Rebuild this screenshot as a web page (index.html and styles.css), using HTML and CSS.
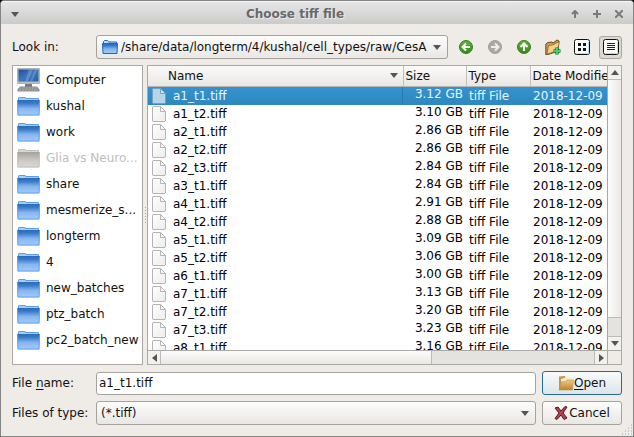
FILE: index.html
```html
<!DOCTYPE html>
<html lang="en">
<head>
<meta charset="utf-8">
<title>Choose tiff file</title>
<link rel="stylesheet" href="styles.css">
</head>
<body>
<svg class="defs" aria-hidden="true">
  <defs>
    <linearGradient id="blue" x1="0" y1="0" x2="0" y2="1">
      <stop offset="0" stop-color="#2a6cb9"/><stop offset=".2" stop-color="#3778c4"/><stop offset=".55" stop-color="#86b6ee"/><stop offset="1" stop-color="#a2ccff"/>
    </linearGradient>
    <linearGradient id="grey" x1="0" y1="0" x2="0" y2="1">
      <stop offset="0" stop-color="#a5a19c"/><stop offset=".6" stop-color="#cfccc8"/><stop offset="1" stop-color="#dad7d4"/>
    </linearGradient>
    <linearGradient id="paper" x1="0" y1="0" x2="1" y2="1">
      <stop offset="0" stop-color="#ffffff"/><stop offset="1" stop-color="#ececec"/>
    </linearGradient>
    <linearGradient id="green" x1="0" y1="0" x2="0" y2="1">
      <stop offset="0" stop-color="#63b53c"/><stop offset="1" stop-color="#2f8a18"/>
    </linearGradient>
    <linearGradient id="gold" x1="0" y1="0" x2="0" y2="1">
      <stop offset="0" stop-color="#f0c886"/><stop offset="1" stop-color="#bd8228"/>
    </linearGradient>
    <linearGradient id="screen" x1="0" y1="0" x2="1" y2="1">
      <stop offset="0" stop-color="#1d4f9c"/><stop offset=".5" stop-color="#3f77bd"/><stop offset="1" stop-color="#2a60a8"/>
    </linearGradient>
    <symbol id="folder" viewBox="0 0 23 20">
      <path d="M1 3h21v3H1z" fill="#a9cdf7"/>
      <path d="M1.500 4V2q0-.5.500-.5h6q.5 0 .5.500v.5h13V4" fill="#a9cdf7" stroke="#5b9eec"/>
      <path d="M0 4h23l-.5 15.500H.500z" fill="url(#blue)"/>
      <path d="M.5 4.500l.5 14.500h21l.5-14.500" fill="none" stroke="#5fa3f5"/>
    </symbol>
    <symbol id="folder-off" viewBox="0 0 23 20">
      <path d="M1 3h21v3H1z" fill="#dad7d4"/>
      <path d="M1.500 4V2q0-.5.500-.5h6q.5 0 .5.500v.5h13V4" fill="#dad7d4" stroke="#c3bfbb"/>
      <path d="M0 4h23l-.5 15.500H.500z" fill="url(#grey)"/>
      <path d="M.5 4.500l.5 14.500h21l.5-14.500" fill="none" stroke="#c3bfbb"/>
    </symbol>
    <symbol id="computer" viewBox="0 0 23 24">
      <path d="M.5.5h22v15H.500z" fill="#b9bdc2" stroke="#b0b4b8"/>
      <path d="M1.500 1.500h20v12h-20z" fill="url(#screen)"/>
      <path d="M12 1.500h4l-5 12H8zM18 1.500h2l-5 12h-2z" fill="#7da7d8" opacity=".5"/>
      <path d="M8 16h7v3H8z" fill="#777b7c"/>
      <path d="M3 18.500h17l2.500 3v2H.5v-2z" fill="#8b8d8c"/>
      <path d="M3 20h17M2 22h19" stroke="#b0b2b0" stroke-dasharray="2 1"/>
    </symbol>
    <symbol id="file" viewBox="0 0 14 16">
      <path d="M1 .5h7.500l5 5v9.500l-.5.5H1L.5 15V1z" fill="url(#paper)" stroke="#b4b4b4"/>
      <path d="M8.500.5v5h5z" fill="#f8f8f8" stroke="#b4b4b4"/>
    </symbol>
    <symbol id="file-on" viewBox="0 0 14 16">
      <path d="M1 .5h7.500l5 5v9.500l-.5.5H1L.5 15V1z" fill="#b7d5e8" stroke="#6fa3c4"/>
      <path d="M8.500.5v5h5z" fill="#cbe2f0" stroke="#6fa3c4"/>
    </symbol>
    <symbol id="down" viewBox="0 0 8 5"><path d="M0 0h8L4 5z" fill="#555"/></symbol>
    <symbol id="up" viewBox="0 0 8 5"><path d="M0 5h8L4 0z" fill="#555"/></symbol>
    <symbol id="left" viewBox="0 0 5 8"><path d="M5 0v8L0 4z" fill="#555"/></symbol>
    <symbol id="right" viewBox="0 0 5 8"><path d="M0 0v8l5-4z" fill="#555"/></symbol>
  </defs>
</svg>
<main class="window">
  <header class="titlebar">
    <button class="wm" aria-label="Window menu"><svg width="8" height="5"><use href="#down"/></svg></button>
    <h1>Choose tiff file</h1>
    <div class="wm-group">
      <button class="wm" aria-label="Shade"><svg width="8" height="8" viewBox="0 0 8 8"><path d="M4 8V1M1 4l3-3 3 3" fill="none" stroke="#7a7a7a" stroke-width="2"/></svg></button>
      <button class="wm" aria-label="Maximize"><svg width="8" height="8" viewBox="0 0 8 8"><path d="M4 0v8M0 4h8" stroke="#7a7a7a" stroke-width="2"/></svg></button>
      <button class="wm" aria-label="Close"><svg width="8" height="8" viewBox="0 0 8 8"><path d="M0 0l8 8M8 0L0 8" stroke="#7a7a7a" stroke-width="2"/></svg></button>
    </div>
  </header>
  <form class="content">
    <div class="lookin">
      <label class="caption" for="path">Look in:</label>
      <div class="combo with-icon">
        <svg class="combo-icon" width="16" height="14" viewBox="0 0 16 14"><path d="M1.500 3V1.500l1-1h3l1 1V2h8v2h-13z" fill="#bcd7f5" stroke="#1467cc"/><path d="M.5 3.500h15l-.5 10H1z" fill="url(#blue)" stroke="#1467cc"/></svg>
        <select id="path"><option>/share/data/longterm/4/kushal/cell_types/raw/CesA</option></select>
        <svg class="combo-arrow" width="8" height="5"><use href="#down"/></svg>
      </div>
      <div class="tools">
        <button type="button" class="tool" aria-label="Back"><svg width="16" height="16" viewBox="0 0 16 16"><circle cx="8" cy="8" r="6.500" fill="url(#green)" stroke="#3a7f22"/><path d="M12 8H5M8 4.500L4.500 8 8 11.500" fill="none" stroke="#fff" stroke-width="2"/></svg></button>
        <button type="button" class="tool" aria-label="Forward" disabled><svg width="16" height="16" viewBox="0 0 16 16"><circle cx="8" cy="8" r="6.500" fill="#aaa8a5" stroke="#a19f9c"/><path d="M4 8h7M8 4.500l3.500 3.500L8 11.500" fill="none" stroke="#f0eeeb" stroke-width="2"/></svg></button>
        <button type="button" class="tool" aria-label="Parent directory"><svg width="16" height="16" viewBox="0 0 16 16"><circle cx="8" cy="8" r="6.500" fill="url(#green)" stroke="#3a7f22"/><path d="M8 12V5M4.500 8L8 4.500 11.500 8" fill="none" stroke="#fff" stroke-width="2"/></svg></button>
        <button type="button" class="tool" aria-label="Create new folder"><svg width="16" height="16" viewBox="0 0 16 16"><path d="M.8 5l2-1.500L7 3l1 1 4-3 1.500.5V12L3 15.500H.800z" fill="#c99a52" stroke="#6e4b1c"/><path d="M3.500 6.500l4-.5 7-3.500-2 9L2 15.300z" fill="#f4cf8c" stroke="#8b642b" stroke-width=".8"/><path d="M12 8.500v7M8.500 12h7" stroke="#167a35" stroke-width="3.500"/><path d="M12 9v6M9 12h6" stroke="#3fd467" stroke-width="2"/></svg></button>
        <button type="button" class="tool" aria-label="List view"><svg width="16" height="16" viewBox="0 0 16 16"><rect x=".5" y=".5" width="15" height="15" rx="2" fill="#fff" stroke="#111"/><path d="M2 14.500h12.500V3" fill="none" stroke="#b9dcf4"/><path d="M4 4h3v3H4zM9 4h3v3H9zM4 9h3v3H4zM9 9h3v3H9z" fill="#151515"/></svg></button>
        <button type="button" class="tool active" aria-label="Detail view" aria-pressed="true"><svg width="16" height="16" viewBox="0 0 16 16"><rect x=".5" y=".5" width="15" height="15" rx="2" fill="#fff" stroke="#111"/><path d="M2 14.500h12.500V3" fill="none" stroke="#b9dcf4"/><path d="M4 4.500h8M4 6.500h8M4 8.500h8M4 10.500h8" stroke="#222"/></svg></button>
      </div>
    </div>

    <div class="panes">
      <ul class="places">
        <li><svg width="23" height="24"><use href="#computer"/></svg><span>Computer</span></li>
        <li><svg width="23" height="20"><use href="#folder"/></svg><span>kushal</span></li>
        <li><svg width="23" height="20"><use href="#folder"/></svg><span>work</span></li>
        <li class="off"><svg width="23" height="20"><use href="#folder-off"/></svg><span>Glia vs Neuro...</span></li>
        <li><svg width="23" height="20"><use href="#folder"/></svg><span>share</span></li>
        <li><svg width="23" height="20"><use href="#folder"/></svg><span>mesmerize_s...</span></li>
        <li><svg width="23" height="20"><use href="#folder"/></svg><span>longterm</span></li>
        <li><svg width="23" height="20"><use href="#folder"/></svg><span>4</span></li>
        <li><svg width="23" height="20"><use href="#folder"/></svg><span>new_batches</span></li>
        <li><svg width="23" height="20"><use href="#folder"/></svg><span>ptz_batch</span></li>
        <li><svg width="23" height="20"><use href="#folder"/></svg><span>pc2_batch_new</span></li>
      </ul>
      <div class="splitter"></div>
      <div class="files">
        <div class="viewport">
          <table>
            <colgroup><col><col class="c-size"><col class="c-type"><col class="c-date"></colgroup>
            <thead><tr><th class="name"><div>Name<svg width="8" height="5"><use href="#down"/></svg></div></th><th>Size</th><th>Type</th><th>Date Modified</th></tr></thead>
            <tbody>
              <tr class="selected"><td><div><svg width="14" height="16"><use href="#file-on"/></svg>a1_t1.tiff</div></td><td>3.12 GB</td><td>tiff File</td><td>2018-12-09</td></tr>
              <tr><td><div><svg width="14" height="16"><use href="#file"/></svg>a1_t2.tiff</div></td><td>3.10 GB</td><td>tiff File</td><td>2018-12-09</td></tr>
              <tr><td><div><svg width="14" height="16"><use href="#file"/></svg>a2_t1.tiff</div></td><td>2.86 GB</td><td>tiff File</td><td>2018-12-09</td></tr>
              <tr><td><div><svg width="14" height="16"><use href="#file"/></svg>a2_t2.tiff</div></td><td>2.86 GB</td><td>tiff File</td><td>2018-12-09</td></tr>
              <tr><td><div><svg width="14" height="16"><use href="#file"/></svg>a2_t3.tiff</div></td><td>2.84 GB</td><td>tiff File</td><td>2018-12-09</td></tr>
              <tr><td><div><svg width="14" height="16"><use href="#file"/></svg>a3_t1.tiff</div></td><td>2.84 GB</td><td>tiff File</td><td>2018-12-09</td></tr>
              <tr><td><div><svg width="14" height="16"><use href="#file"/></svg>a4_t1.tiff</div></td><td>2.91 GB</td><td>tiff File</td><td>2018-12-09</td></tr>
              <tr><td><div><svg width="14" height="16"><use href="#file"/></svg>a4_t2.tiff</div></td><td>2.88 GB</td><td>tiff File</td><td>2018-12-09</td></tr>
              <tr><td><div><svg width="14" height="16"><use href="#file"/></svg>a5_t1.tiff</div></td><td>3.09 GB</td><td>tiff File</td><td>2018-12-09</td></tr>
              <tr><td><div><svg width="14" height="16"><use href="#file"/></svg>a5_t2.tiff</div></td><td>3.06 GB</td><td>tiff File</td><td>2018-12-09</td></tr>
              <tr><td><div><svg width="14" height="16"><use href="#file"/></svg>a6_t1.tiff</div></td><td>3.00 GB</td><td>tiff File</td><td>2018-12-09</td></tr>
              <tr><td><div><svg width="14" height="16"><use href="#file"/></svg>a7_t1.tiff</div></td><td>3.13 GB</td><td>tiff File</td><td>2018-12-09</td></tr>
              <tr><td><div><svg width="14" height="16"><use href="#file"/></svg>a7_t2.tiff</div></td><td>3.20 GB</td><td>tiff File</td><td>2018-12-09</td></tr>
              <tr><td><div><svg width="14" height="16"><use href="#file"/></svg>a7_t3.tiff</div></td><td>3.23 GB</td><td>tiff File</td><td>2018-12-09</td></tr>
              <tr><td><div><svg width="14" height="16"><use href="#file"/></svg>a8_t1.tiff</div></td><td>3.16 GB</td><td>tiff File</td><td>2018-12-09</td></tr>
            </tbody>
          </table>
        </div>
        <div class="vbar">
          <button type="button" aria-label="Scroll up"><svg width="8" height="5"><use href="#up"/></svg></button>
          <div class="vthumb"></div><div class="track"></div>
          <button type="button" aria-label="Scroll down"><svg width="8" height="5"><use href="#down"/></svg></button>
        </div>
        <div class="hbar">
          <button type="button" aria-label="Scroll left"><svg width="5" height="8"><use href="#left"/></svg></button>
          <div class="hthumb"></div><div class="track"></div>
          <button type="button" aria-label="Scroll right"><svg width="5" height="8"><use href="#right"/></svg></button>
        </div>
        <div class="corner"></div>
      </div>
    </div>

    <div class="fields">
      <label for="fname">File <u>n</u>ame:</label>
      <input id="fname" type="text" value="a1_t1.tiff">
      <button type="button" class="action primary"><svg width="16" height="16" viewBox="0 0 16 16"><path d="M1 1.500V14h13V4H8L7 1z" fill="#c4954d"/><path d="M3 4l6-2 5 1v10H3z" fill="#f6ead2"/><path d="M1 15L3 7l5-.5 1-1.500h6.500L14.500 15z" fill="url(#gold)" stroke="#c59147" stroke-width=".6"/></svg><span><u>O</u>pen</span></button>
      <label for="ftype">Files of type:</label>
      <div class="combo">
        <select id="ftype"><option>(*.tiff)</option></select>
        <svg class="combo-arrow" width="8" height="5"><use href="#down"/></svg>
      </div>
      <button type="button" class="action"><svg width="15" height="14" viewBox="0 0 15 14"><path d="M1 2l3-1 3 4 4-4.500 2 .5-4 6 4 5-3 1.500-3-4.500L3 13.500l-2-1L5 7z" fill="#b8404e" stroke="#4d1c22"/></svg><span>Cancel</span></button>
    </div>
  </form>
  <svg class="grip" width="12" height="12" viewBox="0 0 12 12" aria-hidden="true"><path d="M10 1h1M7 4h1M10 4h1M4 7h1M7 7h1M10 7h1M1 10h1M4 10h1M7 10h1M10 10h1" stroke="#a8a5a1"/></svg>
</main>
</body>
</html>
```
FILE: styles.css
```css
* { box-sizing: border-box; }
html, body { height: 100%; }
body { margin: 0; background: #000; color: #111; font: 12px/16px "DejaVu Sans", sans-serif; }
button, input, select { font: inherit; color: inherit; margin: 0; }
button { padding: 0; }
svg { display: block; flex: none; }
u { text-underline-offset: 2px; }
.defs { position: absolute; width: 0; height: 0; }

.window { position: relative; display: flex; flex-direction: column; height: 100%; overflow: hidden; background: #efebe7; border: 1px solid #858585; border-radius: 4px 4px 0 0; }
.titlebar { display: flex; align-items: center; flex: none; height: 23px; padding: 2px 8px 0; background: linear-gradient(#e6e6e6, #cbcbcb); border-top: 1px solid #f4f4f4; }
.titlebar h1 { flex: 1; margin: 0; font-size: 12px; text-align: center; color: #696969; text-shadow: 1px 1px #ececec; }
.titlebar .wm { display: flex; align-items: center; justify-content: center; width: 12px; height: 16px; border: 0; background: none; }
.wm-group { display: flex; gap: 10px; }

.content { display: flex; flex: 1; flex-direction: column; min-height: 0; padding: 11px 11px 11px; gap: 6px; }
.lookin { display: flex; align-items: center; }
.caption { width: 84px; }
.combo { position: relative; flex: 1; min-width: 0; }
.combo select { display: block; width: 100%; height: 24px; padding: 0 16px 0 4px; appearance: none; border: 1px solid #a5a19d; border-radius: 3px; background: linear-gradient(#fdfdfc, #e9e7e4); overflow: hidden; }
.combo.with-icon select { padding-left: 24px; }
.combo-icon { position: absolute; left: 6px; top: 5px; pointer-events: none; }
.combo-arrow { position: absolute; right: 7px; top: 10px; pointer-events: none; }
.tools { display: flex; gap: 6px; margin-left: 6px; }
.tool { display: flex; align-items: center; justify-content: center; width: 23px; height: 23px; border: 1px solid transparent; border-radius: 3px; background: none; }
.tool.active { border-color: #aaa6a2; background: #dcd9d5; }

.panes { display: flex; flex: 1; min-height: 0; }
.places { flex: none; width: 131px; margin: 0; padding: 1px 0 1px 4px; list-style: none; overflow: hidden; background: #fff; border: 1px solid #aba8a5; }
.places li { display: flex; align-items: center; gap: 6px; height: 26px; white-space: nowrap; }
.places .off { color: #bebebe; }
.splitter { display: flex; align-items: center; justify-content: center; width: 4px; }
.splitter::before { content: ""; width: 1px; height: 17px; background: repeating-linear-gradient(#aaa 0 1px, transparent 1px 3px); }
.files { display: grid; flex: 1; min-width: 0; grid-template: minmax(0, 1fr) 14px / minmax(0, 1fr) 14px; border: 1px solid #aba8a5; background: #fff; }
.viewport { overflow: hidden; }
table { width: 100%; table-layout: fixed; border-collapse: collapse; }
.c-size { width: 63px; }
.c-type { width: 64px; }
.c-date { width: 77px; }
th { height: 20px; padding: 0 0 0 2px; font-weight: normal; text-align: left; white-space: nowrap; overflow: hidden; background: linear-gradient(#fafaf9, #e9e7e4); border-right: 1px solid #c2bfbc; border-bottom: 1px solid #b7b4b1; }
th:last-child { border-right: 0; }
th.name { padding: 0 5px 0 20px; }
th.name div { display: flex; align-items: center; justify-content: space-between; }
td { height: 18px; padding: 1px 4px 0 3px; line-height: 17px; white-space: nowrap; overflow: hidden; color: #000; }
td div { display: flex; align-items: center; gap: 7px; height: 17px; padding-left: 1px; }
td:nth-child(2) { padding: 0 3px 3px 0; line-height: 15px; text-align: right; }
.selected { background: linear-gradient(#3593cf, #2d88bf); }
.selected td { color: #e8f3fa; }
.selected td:first-child { box-shadow: inset -1px 0 #277bae; }

.vbar, .hbar { display: flex; background: #e4e3df; }
.vbar { flex-direction: column; border-left: 1px solid #aba8a5; }
.hbar { border-top: 1px solid #aba8a5; }
.vbar button, .hbar button { display: flex; flex: none; align-items: center; justify-content: center; width: 13px; height: 14px; border: 0; background: #f3f1ee; }
.hbar button { height: 13px; }
.hbar button:first-child { border-right: 1px solid #bbb; }
.hbar button:last-child { border-left: 1px solid #bbb; }
.vbar button:first-child { border-bottom: 1px solid #bbb; }
.vbar button:last-child { border-top: 1px solid #bbb; }
.track { flex: 1; }
.vthumb { flex: 13; background: linear-gradient(90deg, #fcfcfb, #eae8e5); border-bottom: 1px solid #bbb; }
.hthumb { flex: 0 0 59%; background: linear-gradient(#fcfcfb, #eae8e5); border-right: 1px solid #bbb; }
.corner { border: solid #aba8a5; border-width: 1px 0 0 1px; background: #efebe7; }

.fields { display: grid; grid-template-columns: 78px minmax(0, 1fr) 80px; gap: 6px; align-items: center; }
.fields label { white-space: nowrap; }
.fields input { width: 100%; height: 23px; padding: 0 2px; border: 1px solid #a5a19d; border-radius: 3px; background: #fff; }
.action { display: flex; align-items: center; justify-content: center; height: 24px; border: 1px solid #a5a19d; border-radius: 3px; background: linear-gradient(#fdfdfc, #e9e7e4); }
.action.primary { border-color: #256c9a; background: linear-gradient(#f9fbfb, #dce5ea); }
.grip { position: absolute; right: 0; bottom: 0; }
```
